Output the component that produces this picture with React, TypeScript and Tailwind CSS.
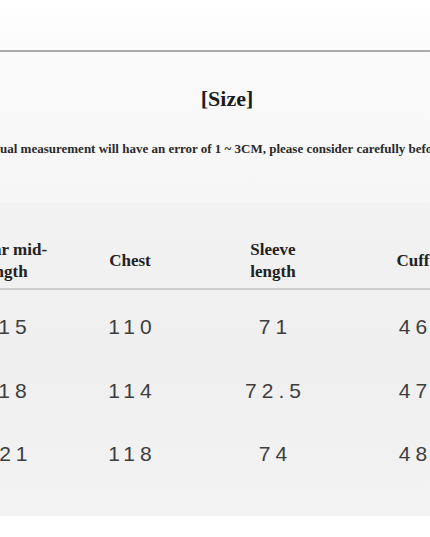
export default function App() {
  const rows = [
    ["115", "110", "71", "46"],
    ["118", "114", "72.5", "47"],
    ["121", "118", "74", "48"],
  ];

  return (
    <div className="h-[537px] w-[430px] overflow-hidden bg-white font-['Liberation_Serif',serif]">
      {/* top strip */}
      <div className="h-[50px] bg-gradient-to-b from-white to-[#fbfbfb]" />
      <div className="h-[2px] bg-[#ababab]" />

      {/* heading */}
      <div className="flex h-[151px] flex-col items-center bg-gradient-to-b from-[#fafafa] to-[#f6f6f6]">
        <h1 className="ml-[24px] mt-[34px] text-[22px] font-[600] leading-[26px] text-[#1c1c1c]">[Size]</h1>
        <div className="mt-[28px] w-full overflow-hidden">
          <p className="ml-[-26px] whitespace-nowrap text-[13px] font-bold leading-[18px] text-[#2a2a2a]">
            Manual measurement will have an error of 1 ~ 3CM, please consider carefully before buying
          </p>
        </div>
      </div>

      {/* table */}
      <div className="h-[313px] overflow-hidden bg-gradient-to-b from-[#f2f2f2] via-[#efefef] to-[#f3f3f3]">
        <div className="ml-[-70px] mt-[25px] w-[532px]">
          <div className="grid h-[62px] grid-cols-[150px_100px_186px_94px] items-center border-b-2 border-[#cdcdcd] pt-[5px] text-center text-[17px] font-[600] leading-[22px] text-[#222]">
            <div>Collar mid-<br />length</div>
            <div>Chest</div>
            <div>Sleeve<br />length</div>
            <div>Cuff</div>
          </div>
          <div className="pt-[5px]">
            {rows.map((r, i) => (
              <div
                key={i}
                className="grid h-[63.5px] grid-cols-[150px_100px_186px_94px] items-center text-center font-['Liberation_Sans',sans-serif] text-[21px] tracking-[5px] text-[#3d3d3d]"
              >
                {r.map((v, j) => (
                  <div key={j} className="pl-[5px]">{v}</div>
                ))}
              </div>
            ))}
          </div>
        </div>
      </div>
    </div>
  );
}
